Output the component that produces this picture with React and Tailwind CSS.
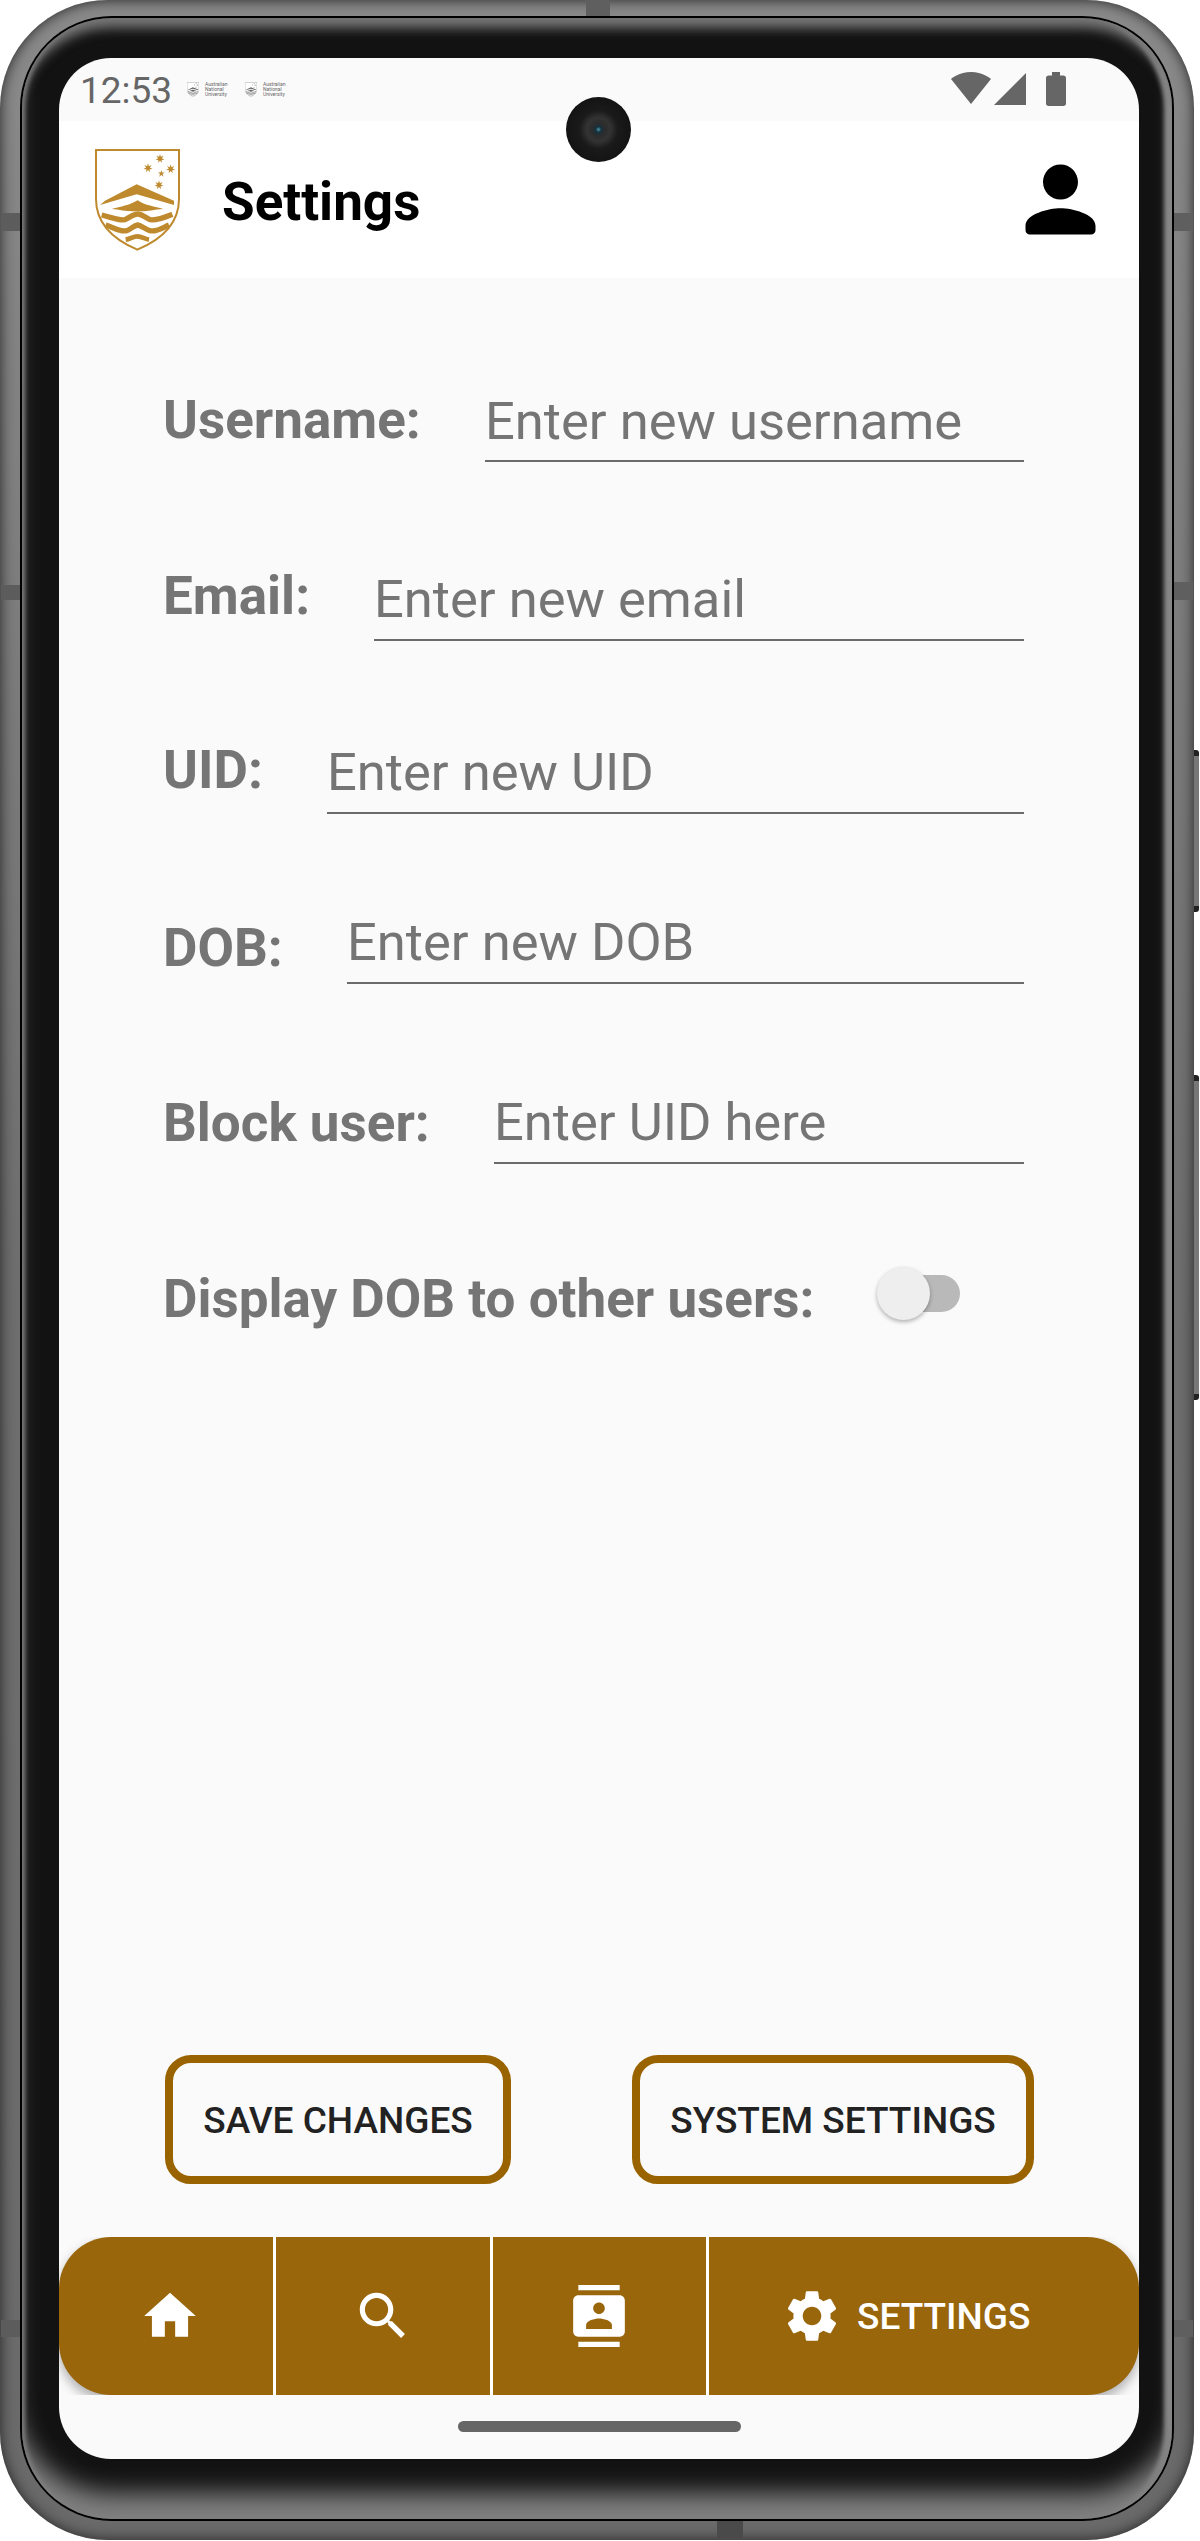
import React from 'react';

const starPoints = (cx, cy, outer, inner, count) => {
  const pts = [];
  for (let i = 0; i < count * 2; i++) {
    const r = i % 2 === 0 ? outer : inner;
    const a = (Math.PI * i) / count - Math.PI / 2;
    pts.push(`${(cx + r * Math.cos(a)).toFixed(1)},${(cy + r * Math.sin(a)).toFixed(1)}`);
  }
  return pts.join(' ');
};

function Shield({ color, className }) {
  return (
    <svg viewBox="0 0 255 306" className={className}>
      <path d="M3 3H252V150C252 215 215 265 127 302C40 265 3 215 3 150Z" fill="#fff" stroke={color} strokeWidth="6" />
      <polygon points={starPoints(195, 29, 14, 6, 7)} fill={color} />
      <polygon points={starPoints(159, 57, 14, 6, 7)} fill={color} />
      <polygon points={starPoints(227, 60, 14, 6, 7)} fill={color} />
      <polygon points={starPoints(199, 74, 11, 4, 5)} fill={color} />
      <polygon points={starPoints(192, 108, 14, 6, 7)} fill={color} />
      <path d="M15 168L30 155L125 106L237 155V168L125 136Z" fill={color} />
      <path d="M50 180C80 172 100 170 128 154C150 170 180 172 205 180C170 182 150 190 128 186C100 190 80 182 50 180Z" fill={color} />
      <path d="M20 198C50 205 70 215 90 212C105 205 115 195 128 195C140 195 150 205 165 212C190 215 210 205 232 196" fill="none" stroke={color} strokeWidth="16" />
      <path d="M32 228C55 235 75 250 95 245C110 240 115 230 128 228C140 230 150 240 165 245C185 250 205 235 222 228" fill="none" stroke={color} strokeWidth="16" />
      <path d="M92 272C105 270 115 262 127 262C140 262 150 270 162 272" fill="none" stroke={color} strokeWidth="14" />
    </svg>
  );
}

function AnuMark({ className }) {
  return (
    <div className={`flex items-start gap-[6px] ${className}`}>
      <Shield color="#666666" className="w-[12px] h-[15px]" />
      <div className="text-[5px] leading-[5px] text-[#666666] font-normal">
        <div>Australian</div>
        <div>National</div>
        <div>University</div>
      </div>
    </div>
  );
}

const rows = [
  { label: 'Username:', placeholder: 'Enter new username', labelClass: 'w-[322px] mb-[12px]', rowClass: 'mt-[113px] h-[71px]', inputClass: 'pb-[9px]' },
  { label: 'Email:', placeholder: 'Enter new email', labelClass: 'w-[211px] mb-[15px]', rowClass: 'mt-[107px] h-[72px]', inputClass: 'pb-[10px]' },
  { label: 'UID:', placeholder: 'Enter new UID', labelClass: 'w-[164px] mb-[14px]', rowClass: 'mt-[101px] h-[72px]', inputClass: 'pb-[10px]' },
  { label: 'DOB:', placeholder: 'Enter new DOB', labelClass: 'w-[184px] mb-[6px]', rowClass: 'mt-[98px] h-[72px]', inputClass: 'pb-[10px]' },
  { label: 'Block user:', placeholder: 'Enter UID here', labelClass: 'w-[331px] mb-[11px]', rowClass: 'mt-[108px] h-[72px]', inputClass: 'pb-[10px]' },
];

const HOME = 'M10 20v-6h4v6h5v-8h3L12 3 2 12h3v8z';
const SEARCH = 'M15.5 14h-.79l-.28-.27C15.41 12.59 16 11.11 16 9.5 16 5.91 13.09 3 9.5 3S3 5.91 3 9.5 5.91 16 9.5 16c1.61 0 3.09-.59 4.23-1.57l.27.28v.79l5 4.99L20.49 19l-4.99-5zm-6 0C7.01 14 5 11.99 5 9.5S7.01 5 9.5 5 14 7.01 14 9.5 11.99 14 9.5 14z';
const CONTACTS = 'M20 0H4v2h16V0zM4 24h16v-2H4v2zM20 4H4c-1.1 0-2 .9-2 2v12c0 1.1.9 2 2 2h16c1.1 0 2-.9 2-2V6c0-1.1-.9-2-2-2zm-8 2.75c1.24 0 2.25 1.01 2.25 2.25s-1.01 2.25-2.25 2.25S9.75 10.24 9.75 9 10.76 6.75 12 6.75zM17 17H7v-1.5c0-1.67 3.33-2.5 5-2.5s5 .83 5 2.5V17z';
const GEAR = 'M19.14 12.94c.04-.3.06-.61.06-.94 0-.32-.02-.64-.07-.94l2.03-1.58c.18-.14.23-.41.12-.61l-1.92-3.32c-.12-.22-.37-.29-.59-.22l-2.39.96c-.5-.38-1.03-.7-1.62-.94l-.36-2.54c-.04-.24-.24-.41-.48-.41h-3.84c-.24 0-.43.17-.47.41l-.36 2.54c-.59.24-1.13.57-1.62.94l-2.39-.96c-.22-.08-.47 0-.59.22L2.74 8.87c-.12.21-.08.47.12.61l2.03 1.58c-.05.3-.09.63-.09.94s.02.64.07.94l-2.03 1.58c-.18.14-.23.41-.12.61l1.92 3.32c.12.22.37.29.59.22l2.39-.96c.5.38 1.03.7 1.62.94l.36 2.54c.05.24.24.41.48.41h3.84c.24 0 .44-.17.47-.41l.36-2.54c.59-.24 1.13-.56 1.62-.94l2.39.96c.22.08.47 0 .59-.22l1.92-3.32c.12-.22.07-.47-.12-.61l-2.01-1.58zM12 15.6c-1.98 0-3.6-1.62-3.6-3.6s1.62-3.6 3.6-3.6 3.6 1.62 3.6 3.6-1.62 3.6-3.6 3.6z';
const PERSON = 'M12 12c2.21 0 4-1.79 4-4s-1.79-4-4-4-4 1.79-4 4 1.79 4 4 4zm0 2c-2.67 0-8 1.34-8 4v1c0 .55.45 1 1 1h14c.55 0 1-.45 1-1v-1c0-2.66-5.33-4-8-4z';

function NavIcon({ d }) {
  return (
    <svg viewBox="0 0 24 24" className="w-[62px] h-[62px] shrink-0" fill="#ffffff">
      <path d={d} />
    </svg>
  );
}

export default function App() {
  return (
    <div className="relative w-[1200px] h-[2541px] bg-white font-['Roboto',sans-serif] overflow-hidden">
      {/* side buttons */}
      <div className="absolute left-[1190px] top-[750px] w-[9px] h-[162px] rounded-r-[3px] bg-[#777777] border-y-[6px] border-y-[#222222]"></div>
      <div className="absolute left-[1190px] top-[1075px] w-[9px] h-[325px] rounded-r-[3px] bg-[#777777] border-y-[6px] border-y-[#222222]"></div>

      {/* phone body */}
      <div className="relative w-[1194px] h-[2540px] rounded-[108px] bg-gradient-to-b from-[#8a8a8a] via-[#6e6e6e] to-[#6a6a6a] pt-[16px] pl-[20px] pr-[20px] pb-[19px] shadow-[inset_0_0_14px_#222222]">
        <div className="absolute left-[586px] top-0 w-[24px] h-[16px] bg-[#5f5f5f]"></div>
        <div className="absolute left-[717px] bottom-0 w-[26px] h-[19px] bg-[#4a4a4a]"></div>
        <div className="absolute left-[1px] top-[213px] w-[19px] h-[18px] bg-[#5c5c5c]"></div>
        <div className="absolute left-[1px] top-[585px] w-[19px] h-[15px] bg-[#5c5c5c]"></div>
        <div className="absolute left-[1px] top-[2320px] w-[19px] h-[17px] bg-[#5c5c5c]"></div>
        <div className="absolute right-[1px] top-[213px] w-[19px] h-[18px] bg-[#5f5f5f]"></div>
        <div className="absolute right-[1px] top-[582px] w-[19px] h-[18px] bg-[#5f5f5f]"></div>
        <div className="absolute right-[1px] top-[2320px] w-[19px] h-[17px] bg-[#5f5f5f]"></div>

        <div className="h-full rounded-[92px] bg-black p-[2px]">
          <div className="h-full rounded-[90px] bg-[#121212] pt-[40px] pl-[37px] pr-[33px] pb-[60px] shadow-[inset_0_16px_12px_-6px_#777777,inset_0_-34px_24px_-8px_#808080,inset_5px_0_4px_-2px_#777777,inset_-11px_0_4px_-3px_#8a8a8a]">
            {/* screen */}
            <div className="relative h-full rounded-[52px] overflow-hidden bg-[#fafafa] flex flex-col">
              {/* camera */}
              <div className="absolute left-[507px] top-[39px] z-10 w-[65px] h-[65px] rounded-full bg-[radial-gradient(circle,#4a96a8_0,#15303c_6%,#2c2c2c_14%,#333333_26%,#1a1a1a_42%,#0d0d0d_100%)]"></div>

              {/* status bar */}
              <div className="h-[63px] shrink-0 flex items-start">
                <div className="w-[128px] pl-[21px] pt-[14px] text-[37px] leading-[37px] text-[#666666]">12:53</div>
                <AnuMark className="mt-[24px] w-[58px]" />
                <AnuMark className="mt-[24px]" />
                <div className="ml-auto mr-[73px] mt-[14px] flex items-start">
                  <svg viewBox="0.36 3 23.28 18.5" preserveAspectRatio="none" className="w-[40px] h-[32px]" fill="#666666">
                    <path d="M12.01 21.49L23.64 7c-.45-.34-4.93-4-11.64-4C5.28 3 .81 6.66.36 7l11.64 14.5.01-.01z" />
                  </svg>
                  <svg viewBox="2 2 20 20" className="ml-[3px] mt-[1px] w-[32px] h-[32px]" fill="#666666">
                    <path d="M2 22h20V2z" />
                  </svg>
                  <svg viewBox="7 2 10 20" preserveAspectRatio="none" className="ml-[20px] w-[20px] h-[34px]" fill="#666666">
                    <path d="M15.67 4H14V2h-4v2H8.33C7.6 4 7 4.6 7 5.33v15.33C7 21.4 7.6 22 8.33 22h7.33c.74 0 1.34-.6 1.34-1.33V5.33C17 4.6 16.4 4 15.67 4z" />
                  </svg>
                </div>
              </div>

              {/* header */}
              <div className="h-[157px] shrink-0 bg-white flex items-center">
                <Shield color="#bf8a2e" className="ml-[36px] w-[85px] h-[102px] shrink-0" />
                <div className="ml-[42px] mt-[4px] text-[53px] leading-[60px] font-bold text-black">Settings</div>
                <svg viewBox="0 0 24 24" className="ml-auto mr-[26px] w-[105px] h-[105px]" fill="#000000">
                  <path d={PERSON} />
                </svg>
              </div>

              {/* form */}
              <div className="flex-1 pl-[104px] pr-[115px]">
                {rows.map((row) => (
                  <div key={row.label} className={`flex items-end ${row.rowClass}`}>
                    <div className={`shrink-0 text-[53px] leading-[60px] font-bold text-[#757575] ${row.labelClass}`}>{row.label}</div>
                    <div className={`flex-1 border-b-2 border-[#6b6b6b] text-[52.5px] leading-[60px] text-[#757575] ${row.inputClass}`}>{row.placeholder}</div>
                  </div>
                ))}
                <div className="flex items-start mt-[100px]">
                  <div className="w-[714px] shrink-0 mt-[5px] text-[53px] leading-[60px] font-bold text-[#757575]">Display DOB to other users:</div>
                  <div className="relative mt-[3px] w-[83px] h-[53px] flex items-center">
                    <div className="ml-[5px] w-[78px] h-[37px] rounded-full bg-[#b9b9b9]"></div>
                    <div className="absolute left-0 top-0 w-[53px] h-[53px] rounded-full bg-[#eeeeee] shadow-[0_2px_4px_rgba(0,0,0,0.3)]"></div>
                  </div>
                </div>
              </div>

              {/* buttons */}
              <div className="shrink-0 flex pl-[106px] gap-[121px] mb-[53px]">
                <div className="w-[346px] h-[129px] rounded-[26px] border-[8px] border-[#996300] flex items-center justify-center pt-[2px] text-[37px] font-medium text-[#222222]">SAVE CHANGES</div>
                <div className="w-[402px] h-[129px] rounded-[26px] border-[8px] border-[#996300] flex items-center justify-center pt-[2px] text-[37px] font-medium text-[#222222]">SYSTEM SETTINGS</div>
              </div>

              {/* bottom nav */}
              <div className="shrink-0 h-[158px] overflow-hidden">
                <div className="h-[158px] rounded-[52px] bg-[#99660c] flex shadow-[0_6px_12px_rgba(0,0,0,0.3)]">
                  <div className="w-[217px] border-r-[3px] border-white flex items-center justify-center pl-[8px]">
                    <NavIcon d={HOME} />
                  </div>
                  <div className="w-[217px] border-r-[3px] border-white flex items-center justify-center">
                    <NavIcon d={SEARCH} />
                  </div>
                  <div className="w-[216px] border-r-[3px] border-white flex items-center justify-center pr-[2px]">
                    <NavIcon d={CONTACTS} />
                  </div>
                  <div className="flex-1 flex items-center pl-[72px]">
                    <NavIcon d={GEAR} />
                    <span className="ml-[14px] mt-[2px] text-[37px] font-medium text-white">SETTINGS</span>
                  </div>
                </div>
              </div>

              {/* gesture bar */}
              <div className="h-[64px] shrink-0 flex justify-center pt-[26px]">
                <div className="w-[283px] h-[11px] rounded-full bg-[#666666]"></div>
              </div>
            </div>
          </div>
        </div>
      </div>
    </div>
  );
}
